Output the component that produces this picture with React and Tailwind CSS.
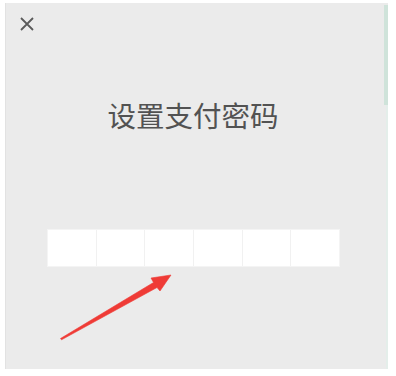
export default function App() {
  return (
    <div className="w-[396px] h-[376px] bg-white relative overflow-hidden" style={{ fontFamily: '"Noto Sans CJK SC", "Noto Sans", sans-serif' }}>
      <div className="absolute left-[5px] top-[3px] w-[383px] h-[366px] bg-[#ebebeb] border-l border-[#e2e2e2] flex flex-col">
        <div className="h-[40px] pl-[13px] pt-[14px]">
          <svg width="16" height="14" viewBox="0 0 16 14">
            <path d="M2 1 L14 13 M14 1 L2 13" stroke="#5a5a5a" strokeWidth="1.8" fill="none" />
          </svg>
        </div>
        <div className="mt-[56px] pr-[8px] text-center text-[28.5px] leading-[32px] text-[#525252] tracking-[0px]">设置支付密码</div>
        <div className="mt-[98px] ml-[41px] w-[293px] h-[38px] bg-white flex border border-[#f4f4f4]">
          {[0, 1, 2, 3, 4, 5].map((i) => (
            <div key={i} className={i < 5 ? "flex-1 border-r border-[#f1f1f1]" : "flex-1"} />
          ))}
        </div>
      </div>
      <div className="absolute left-[384px] top-[5px] w-[4px] h-[100px] bg-[#cfe3da]" />
      <div className="absolute left-[386px] top-[105px] w-[2px] h-[264px] bg-[#e4eeea]" />
      <svg className="absolute left-0 top-0" width="396" height="376" viewBox="0 0 396 376">
        <path d="M60.5 338.5 L153.5 282.5 L151 278 L171 275 L160 291 L157 287.5 L61.5 339.8 Z" fill="#ef3b36" stroke="#ef3b36" strokeWidth="0.6" strokeLinejoin="round" />
      </svg>
    </div>
  );
}
